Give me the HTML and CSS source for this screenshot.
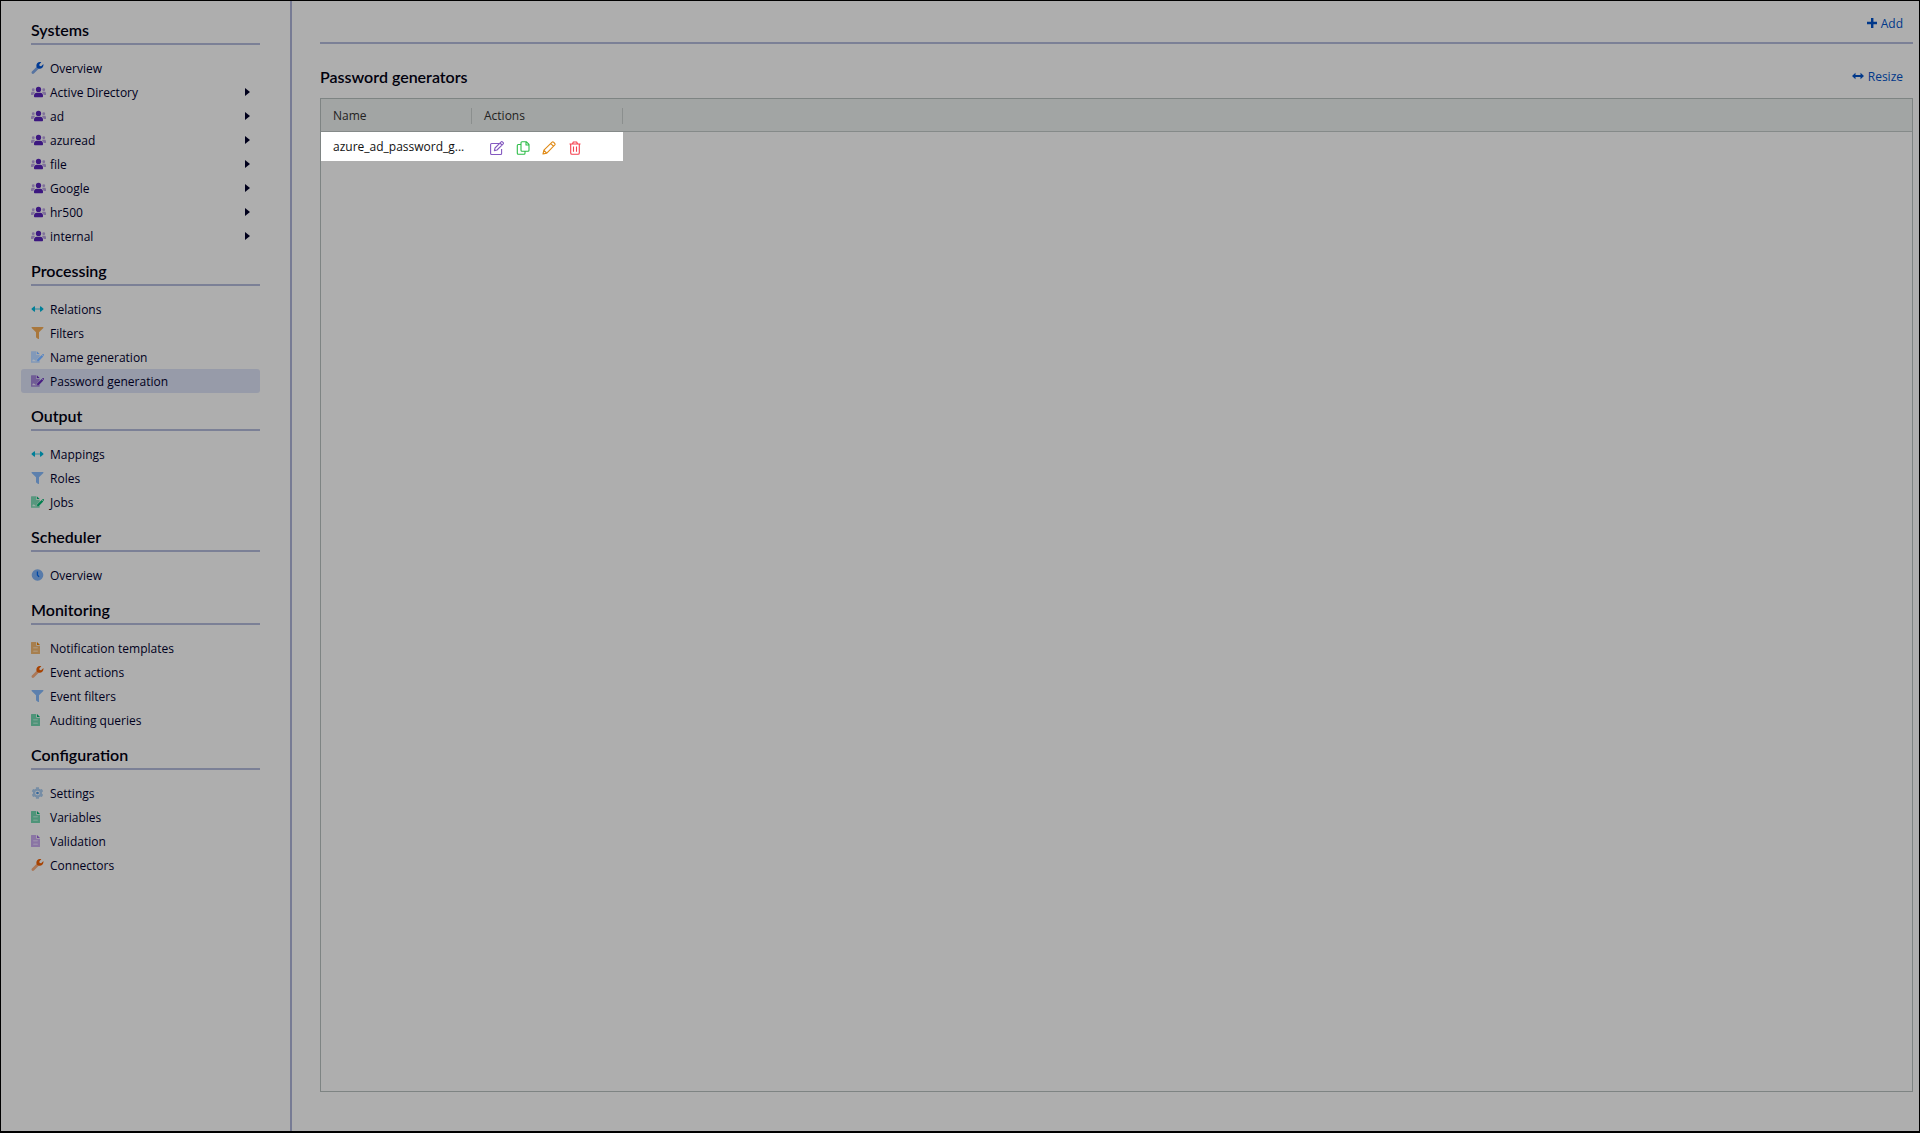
FILE: index.html
```html
<!DOCTYPE html>
<html lang="en">
<head>
    <meta charset="UTF-8">
    <meta name="viewport" content="width=device-width, initial-scale=1.0">
    <title>Password generators</title>
    <link rel="stylesheet" href="styles.css">
</head>
<body>

    <!-- Icon shapes -->
    <svg class="sprite" aria-hidden="true">
        <symbol id="wrench" viewBox="0 0 512 512">
            <path opacity=".5" d="M19 407 233 194c14 38 45 69 84 84L104 493c-25 25-65 25-85 0s-25-61 0-86z"/>
            <path d="M508 109c-2-9-13-12-20-5l-74 74-68-11-11-68 74-74c7-7 4-18-5-21-53-13-110 1-151 42-39 39-54 94-41 146 8 46 47 82 94 91 54 15 113 1 155-41 42-41 56-99 47-133z"/>
        </symbol>
        <symbol id="users" viewBox="0 0 640 512">
            <g opacity=".4">
                <circle cx="96" cy="160" r="60"/>
                <circle cx="544" cy="160" r="60"/>
                <path d="M0 384v-64c0-40 25-70 64-70h64c20 0 35 6 46 18-40 25-65 65-72 116zM640 384v-64c0-40-25-70-64-70h-64c-20 0-35 6-46 18 40 25 65 65 72 116z"/>
            </g>
            <circle cx="320" cy="144" r="112"/>
            <path d="M243 288h154c66 0 115 52 115 115v29c0 27-21 48-48 48H176c-27 0-48-21-48-48v-29c0-63 49-115 115-115z"/>
        </symbol>
        <symbol id="arrows" viewBox="0 0 512 512">
            <path opacity=".5" d="M140 226h232v60H140z"/>
            <path d="m8 239 100-93c15-14 42-4 42 18v184c0 22-27 32-42 18L8 273c-10-10-10-24 0-34zM504 239 404 146c-15-14-42-4-42 18v184c0 22 27 32 42 18l100-93c10-10 10-24 0-34z"/>
        </symbol>
        <symbol id="filter" viewBox="0 0 512 512">
            <path d="M488 0H24C3 0-8 26 7 41l185 185v206c0 8 4 15 10 20l80 55c16 11 38 0 38-20V226L505 41c15-15 4-41-17-41z"/>
        </symbol>
        <symbol id="sign" viewBox="0 0 576 512">
            <path opacity=".5" d="M24 0h200v136c0 14 10 24 24 24h136v70L256 358v90h90l38-36v76c0 14-10 24-24 24H24c-14 0-24-10-24-24V24C0 10 10 0 24 0z"/>
            <path d="M256 0v128h128zM270 370l204-203 70 70-204 203h-70zM493 148l20-20c12-12 30-12 42 0l14 14c12 12 12 30 0 42l-14 26z"/>
            <path class="cut" d="m60 420 36-70 30 44 34-20 30 46h46v28H60z"/>
        </symbol>
        <symbol id="file" viewBox="0 0 384 512">
            <path opacity=".55" d="M24 0h200v136c0 14 10 24 24 24h136v328c0 14-10 24-24 24H24c-14 0-24-10-24-24V24C0 10 10 0 24 0z"/>
            <path d="M256 0v128h128z"/>
            <path class="cut" d="M96 230h192v34H96zM96 370h192v34H96z"/>
        </symbol>
        <symbol id="clock" viewBox="0 0 512 512">
            <circle cx="256" cy="256" r="248" opacity=".5"/>
            <path d="M226 104h54v142l62 74-42 34-74-88z"/>
        </symbol>
        <symbol id="gear" viewBox="0 0 512 512">
            <path opacity=".45" fill-rule="evenodd" d="m487 316-42-25c4-23 4-47 0-70l42-25c5-3 8-9 6-14-11-36-30-69-55-96-4-4-10-5-15-2l-43 25c-18-16-38-28-60-36V24c0-6-4-11-10-12-36-8-74-8-110 0-6 1-10 6-10 12v49c-22 8-42 20-60 36L87 84c-5-3-11-2-15 2-25 27-44 60-55 96-2 5 1 11 6 14l42 25c-4 23-4 47 0 70l-42 25c-5 3-8 9-6 14 11 36 30 69 55 96 4 4 10 5 15 2l43-25c18 16 38 28 60 36v49c0 6 4 11 10 12 36 8 74 8 110 0 6-1 10-6 10-12v-49c22-8 42-20 60-36l43 25c5 3 11 2 15-2 25-27 44-60 55-96 2-5-1-11-6-14zM256 156a100 100 0 1 1 0 200 100 100 0 0 1 0-200z"/>
            <circle cx="256" cy="256" r="58"/>
        </symbol>
        <symbol id="plus" viewBox="0 0 10 10">
            <path d="M4 0h2.400v3.800H10v2.400H6.400V10H4V6.200H0V3.800h4z"/>
        </symbol>
        <symbol id="resize" viewBox="0 0 12 8">
            <path d="M0 4 3.500.8v2.300h5V.8L12 4 8.500 7.200V4.900h-5v2.300z"/>
        </symbol>
        <symbol id="edit" viewBox="0 0 14 14">
            <path class="line" d="M9 2.500H1.600q-1 0-1 1v9q0 1 1 1h9q1 0 1-1V8M5 7l6.200-6.200q.6-.5 1.200 0l.8.800q.5.600 0 1.200L7 9l-2.600.600zM10 2l2 2"/>
        </symbol>
        <symbol id="copy" viewBox="0 0 14 14">
            <path class="line" d="M6 .8h4.500L13 3.300v6q0 1-1 1H6q-1 0-1-1v-7.500q0-1 1-1zM10 1v3h3M5 3.500H2.300q-1 0-1 1v7.700q0 1 1 1H8q1 0 1-1v-1.900"/>
        </symbol>
        <symbol id="pencil" viewBox="0 0 14 14">
            <path class="line" d="m1 13 .9-3.800 8.200-8q.7-.6 1.400 0l1.300 1.300q.6.700 0 1.400l-8 8.200zM8.800 2.600l2.600 2.600M2 9.500 4.500 12"/>
        </symbol>
        <symbol id="trash" viewBox="0 0 14 14">
            <path class="line" d="M1.500 3h11M4.500 3l.8-2h3.400l.8 2M2.700 3v9q0 1.300 1.300 1.300h6q1.300 0 1.300-1.300V3M5.500 5.500v5.300M8.500 5.500v5.300"/>
        </symbol>
    </svg>

    <!-- Sidebar -->
    <nav class="sidebar">
        <h2>Systems</h2>
        <ul>
            <li><a href="#"><svg class="icon blue-dark"><use href="#wrench"/></svg>Overview</a></li>
            <li><a href="#" class="more"><svg class="icon users"><use href="#users"/></svg>Active Directory</a></li>
            <li><a href="#" class="more"><svg class="icon users"><use href="#users"/></svg>ad</a></li>
            <li><a href="#" class="more"><svg class="icon users"><use href="#users"/></svg>azuread</a></li>
            <li><a href="#" class="more"><svg class="icon users"><use href="#users"/></svg>file</a></li>
            <li><a href="#" class="more"><svg class="icon users"><use href="#users"/></svg>Google</a></li>
            <li><a href="#" class="more"><svg class="icon users"><use href="#users"/></svg>hr500</a></li>
            <li><a href="#" class="more"><svg class="icon users"><use href="#users"/></svg>internal</a></li>
        </ul>

        <h2>Processing</h2>
        <ul>
            <li><a href="#"><svg class="icon cyan"><use href="#arrows"/></svg>Relations</a></li>
            <li><a href="#"><svg class="icon sand"><use href="#filter"/></svg>Filters</a></li>
            <li><a href="#"><svg class="icon sky"><use href="#sign"/></svg>Name generation</a></li>
            <li><a href="#" class="active"><svg class="icon purple"><use href="#sign"/></svg>Password generation</a></li>
        </ul>

        <h2>Output</h2>
        <ul>
            <li><a href="#"><svg class="icon cyan"><use href="#arrows"/></svg>Mappings</a></li>
            <li><a href="#"><svg class="icon steel"><use href="#filter"/></svg>Roles</a></li>
            <li><a href="#"><svg class="icon green"><use href="#sign"/></svg>Jobs</a></li>
        </ul>

        <h2>Scheduler</h2>
        <ul>
            <li><a href="#"><svg class="icon blue"><use href="#clock"/></svg>Overview</a></li>
        </ul>

        <h2>Monitoring</h2>
        <ul>
            <li><a href="#"><svg class="icon file orange"><use href="#file"/></svg>Notification templates</a></li>
            <li><a href="#"><svg class="icon rust"><use href="#wrench"/></svg>Event actions</a></li>
            <li><a href="#"><svg class="icon steel"><use href="#filter"/></svg>Event filters</a></li>
            <li><a href="#"><svg class="icon file green"><use href="#file"/></svg>Auditing queries</a></li>
        </ul>

        <h2>Configuration</h2>
        <ul>
            <li><a href="#"><svg class="icon gear"><use href="#gear"/></svg>Settings</a></li>
            <li><a href="#"><svg class="icon file green"><use href="#file"/></svg>Variables</a></li>
            <li><a href="#"><svg class="icon file violet"><use href="#file"/></svg>Validation</a></li>
            <li><a href="#"><svg class="icon rust"><use href="#wrench"/></svg>Connectors</a></li>
        </ul>
    </nav>

    <!-- Content -->
    <main class="content">
        <div class="toolbar">
            <button type="button" class="link-btn"><svg class="plus"><use href="#plus"/></svg>Add</button>
        </div>

        <div class="title-row">
            <h1>Password generators</h1>
            <button type="button" class="link-btn"><svg class="resize"><use href="#resize"/></svg>Resize</button>
        </div>

        <div class="grid">
            <table>
                <thead>
                    <tr>
                        <th class="col"><span>Name</span></th>
                        <th class="col"><span>Actions</span></th>
                        <td></td>
                    </tr>
                </thead>
                <tbody>
                    <tr>
                        <td class="lit">azure_ad_password_g...</td>
                        <td class="lit">
                            <div class="actions">
                                <button type="button" aria-label="Edit" class="edit"><svg><use href="#edit"/></svg></button>
                                <button type="button" aria-label="Copy" class="copy"><svg><use href="#copy"/></svg></button>
                                <button type="button" aria-label="Rename" class="rename"><svg><use href="#pencil"/></svg></button>
                                <button type="button" aria-label="Delete" class="delete"><svg><use href="#trash"/></svg></button>
                            </div>
                        </td>
                        <td></td>
                    </tr>
                </tbody>
            </table>
        </div>
    </main>

</body>
</html>
```
FILE: styles.css
```css
* {
    margin: 0;
    padding: 0;
    box-sizing: border-box;
}

body {
    display: flex;
    min-height: 100vh;
    background: #aeaeae;
    border: 1px solid #000;
    border-bottom-width: 2px;
    color: #00001c;
    font-family: "Open Sans", sans-serif;
    font-size: 12px;
}

.sprite {
    position: absolute;
    width: 0;
    height: 0;
}

svg {
    fill: currentColor;
}

button {
    border: 0;
    background: none;
    font: inherit;
    cursor: pointer;
}

/* Sidebar */
.sidebar {
    width: 291px;
    flex-shrink: 0;
    padding: 6px 30px 0 20px;
    border-right: 2px solid #777b94;
}

.sidebar h2 {
    height: 38px;
    margin: 0 0 11px 10px;
    padding-top: 11px;
    border-bottom: 2px solid #7b8096;
    line-height: 24px;
}

.sidebar h2,
.content h1 {
    color: #00000c;
    font-family: Lato, sans-serif;
    font-size: 16px;
    font-weight: 600;
}

.sidebar ul {
    list-style: none;
}

.sidebar a {
    display: flex;
    align-items: center;
    height: 24px;
    padding: 0 10px;
    border-radius: 3px;
    color: #00001c;
    text-decoration: none;
}

.sidebar a.active {
    background: #979ba9;
}

.sidebar a.more::after {
    content: "";
    margin-left: auto;
    border: 4px solid transparent;
    border-left: 5px solid #00001c;
    border-right: 0;
}

/* Icons */
.icon {
    width: 13px;
    height: 12px;
    margin-right: 6px;
}

.icon.users {
    width: 15px;
    margin-right: 4px;
    color: #3c1780;
}

.icon.file {
    width: 9px;
    margin-right: 10px;
}

.cut {
    fill: #b9b9b9;
    opacity: 0.7;
}

.blue-dark { color: #003a94; }
.blue { color: #0047a5; }
.cyan { color: #007f98; }
.sand { color: #a9773c; }
.sky { color: #5584c4; }
.steel { color: #5d80ad; }
.purple { color: #491f83; }
.violet { color: #6d479c; }
.green { color: #007f4e; }
.orange { color: #a35a00; }
.rust { color: #a74200; }
.gear { color: #33669c; }

/* Content */
.content {
    display: flex;
    flex: 1;
    flex-direction: column;
    padding: 0 6px 39px 28px;
}

.toolbar {
    display: flex;
    justify-content: flex-end;
    height: 43px;
    padding: 10px 10px 0 0;
    border-bottom: 2px solid #7b8096;
}

.title-row {
    display: flex;
    justify-content: space-between;
    align-items: center;
    height: 54px;
    padding: 10px 10px 0 0;
}

.link-btn {
    display: flex;
    align-items: center;
    height: 24px;
    gap: 4px;
    color: #00388a;
}

.plus {
    width: 10px;
    height: 10px;
}

.resize {
    width: 12px;
    height: 8px;
}

/* Grid */
.grid {
    flex: 1;
    border: 1px solid #7e8483;
    color: #111;
}

table {
    width: 100%;
    table-layout: fixed;
    border-collapse: collapse;
}

thead tr {
    height: 32px;
    background: #a2a5a4;
    border-bottom: 1px solid #858a89;
    color: #222;
    text-align: left;
}

.col {
    width: 151px;
    padding-top: 2px;
    font-weight: 500;
}

.col span {
    display: block;
    height: 16px;
    padding-left: 12px;
    border-right: 1px solid #8b8f8e;
    line-height: 16px;
}

tbody tr {
    height: 30px;
}

.lit {
    padding-left: 12px;
    background: #fff;
    white-space: nowrap;
}

.actions {
    display: flex;
    gap: 12px;
    padding: 3px 0 0 6px;
}

.actions button,
.actions svg {
    display: block;
    width: 14px;
    height: 14px;
}

.line {
    fill: none;
    stroke: currentColor;
    stroke-width: 1.1;
    stroke-linejoin: round;
}

.edit { color: #8459c0; }
.copy { color: #2dbd48; }
.rename { color: #e08a16; }
.delete { color: #f5404f; }
```
